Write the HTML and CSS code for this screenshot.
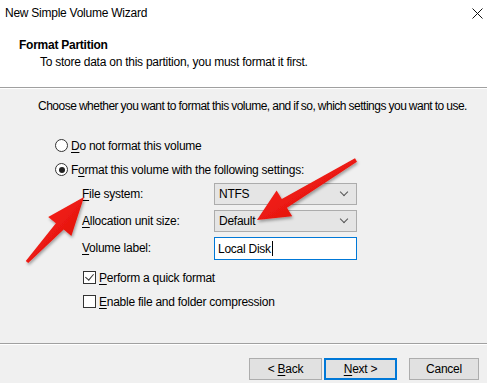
FILE: index.html
```html
<!DOCTYPE html>
<html lang="en">
<head>
  <meta charset="UTF-8" />
  <title>New Simple Volume Wizard</title>
  <link rel="stylesheet" href="styles.css">
</head>
<body>
  <div class="wizard">
    <div class="top">
      <div class="titlebar">
        <span class="title">New Simple Volume Wizard</span>
        <svg class="close" width="11" height="11" viewBox="0 0 11 11">
          <path d="M0.5 0.5 L10.5 10.5 M10.5 0.5 L0.5 10.5" stroke="#111" stroke-width="1" />
        </svg>
      </div>
      <div class="header">
        <div class="heading">Format Partition</div>
        <div class="subheading">To store data on this partition, you must format it first.</div>
      </div>
    </div>

    <div class="content">
      <p class="intro">Choose whether you want to format this volume, and if so, which settings you want to use.</p>

      <label class="radio-row"><span class="radio"></span><span><u>D</u>o not format this volume</span></label>
      <label class="radio-row"><span class="radio checked"></span><span>F<u>o</u>rmat this volume with the following settings:</span></label>

      <div class="settings">
        <span class="field-label"><u>F</u>ile system:</span>
        <div class="select">NTFS<span class="chevron"></span></div>
        <span class="field-label"><u>A</u>llocation unit size:</span>
        <div class="select">Default<span class="chevron"></span></div>
        <span class="field-label"><u>V</u>olume label:</span>
        <div class="textbox">Local Disk<span class="caret"></span></div>
      </div>

      <label class="check-row"><span class="checkbox checked"></span><span><u>P</u>erform a quick format</span></label>
      <label class="check-row"><span class="checkbox"></span><span><u>E</u>nable file and folder compression</span></label>
    </div>

    <div class="footer">
      <button class="btn">&lt; <u>B</u>ack</button>
      <button class="btn default"><u>N</u>ext &gt;</button>
      <button class="btn cancel">Cancel</button>
    </div>
  </div>

  <svg class="arrows" width="487" height="383" viewBox="0 0 487 383">
    <defs>
      <linearGradient id="red" x1="0" y1="0" x2="1" y2="1">
        <stop offset="0" stop-color="#ff2a1a" />
        <stop offset="1" stop-color="#d80a0a" />
      </linearGradient>
      <filter id="shadow" x="-20%" y="-20%" width="140%" height="140%">
        <feDropShadow dx="1" dy="2" stdDeviation="1.5" flood-color="#000" flood-opacity="0.35" />
      </filter>
    </defs>
    <polygon filter="url(#shadow)" fill="url(#red)"
      points="357,161.7 287,207.7 292.2,216.2 257,220 276.6,190.6 281.8,199.1 355,158.3" />
    <polygon filter="url(#shadow)" fill="url(#red)"
      points="28.2,262.9 63.7,229.6 71.4,235.9 84,197 48.2,216.9 55.9,223.2 25.8,261.1" />
  </svg>
</body>
</html>
```

FILE: styles.css
```css
body {
  margin: 0;
  width: 487px;
  height: 383px;
  overflow: hidden;
  font-family: 'Liberation Sans', Arial, sans-serif;
  font-size: 12px;
  letter-spacing: -0.25px;
  color: #000;
  background: #f0f0f0;
  position: relative;
  white-space: nowrap;
}
u {
  text-decoration-thickness: 1px;
  text-underline-offset: 2px;
}
.wizard {
  display: flex;
  flex-direction: column;
  height: 383px;
}
.top {
  background: #fff;
  height: 87px;
  border-bottom: 1px solid #a0a0a0;
  box-shadow: 0 1px 0 #fff;
}
.titlebar {
  height: 26px;
  display: flex;
  align-items: center;
  justify-content: space-between;
  padding: 0 4px 0 5px;
}
.header {
  padding: 12px 0 0 19px;
}
.heading {
  font-weight: bold;
  line-height: 15px;
}
.subheading {
  padding-left: 21px;
  margin-top: 2px;
  line-height: 15px;
}
.content {
  flex: 1;
  padding: 11px 0 0 38px;
}
.intro {
  margin: 0 0 24px 0;
  line-height: 15px;
  letter-spacing: -0.5px;
  word-spacing: -0.3px;
}
.radio-row, .check-row {
  display: flex;
  align-items: center;
  gap: 3px;
  height: 15px;
  margin-left: 17px;
  margin-bottom: 9px;
}
.radio-row + .radio-row {
  margin-bottom: 6px;
}
.check-row {
  margin-left: 45px;
}
.radio {
  width: 11px;
  height: 11px;
  border: 1px solid #333;
  border-radius: 50%;
  background: #fff;
  position: relative;
}
.radio.checked::after {
  content: "";
  position: absolute;
  left: 2.5px;
  top: 2.5px;
  width: 6px;
  height: 6px;
  border-radius: 50%;
  background: #222;
}
.settings {
  display: grid;
  grid-template-columns: 132px 143px;
  row-gap: 5px;
  align-items: center;
  margin: 0 0 10px 44px;
}
.field-label {
  line-height: 15px;
}
.select {
  height: 20px;
  border: 1px solid #acacac;
  background: #e5e5e5;
  display: flex;
  align-items: center;
  justify-content: space-between;
  padding: 0 0 0 4px;
}
.chevron {
  width: 5px;
  height: 5px;
  border-right: 1px solid #555;
  border-bottom: 1px solid #555;
  transform: rotate(45deg);
  margin: 0 9px 4px 0;
}
.textbox {
  height: 21px;
  border: 1px solid #0078d7;
  background: #fff;
  display: flex;
  align-items: center;
  padding: 0 3px;
}
.caret {
  width: 1px;
  height: 15px;
  background: #000;
  margin-left: 1px;
}
.checkbox {
  width: 11px;
  height: 11px;
  border: 1px solid #333;
  background: #fff;
  position: relative;
}
.checkbox.checked::after {
  content: "";
  position: absolute;
  left: 3px;
  top: 0;
  width: 4px;
  height: 7px;
  border-right: 1.5px solid #333;
  border-bottom: 1.5px solid #333;
  transform: rotate(40deg);
}
.footer {
  height: 40px;
  border-top: 1px solid #a0a0a0;
  box-shadow: inset 0 1px 0 #fff;
  display: flex;
  align-items: flex-start;
  padding: 14px 0 0 249px;
  box-sizing: border-box;
}
.btn {
  font-family: inherit;
  font-size: 12px;
  letter-spacing: -0.25px;
  color: #000;
  width: 73px;
  height: 22px;
  background: #e1e1e1;
  border: 1px solid #adadad;
  padding: 0;
  margin-right: 2px;
}
.btn.default {
  border: 2px solid #0078d7;
}
.btn.cancel {
  margin-left: 10px;
  width: 70px;
}
.arrows {
  position: absolute;
  left: 0;
  top: 0;
  pointer-events: none;
}
```
